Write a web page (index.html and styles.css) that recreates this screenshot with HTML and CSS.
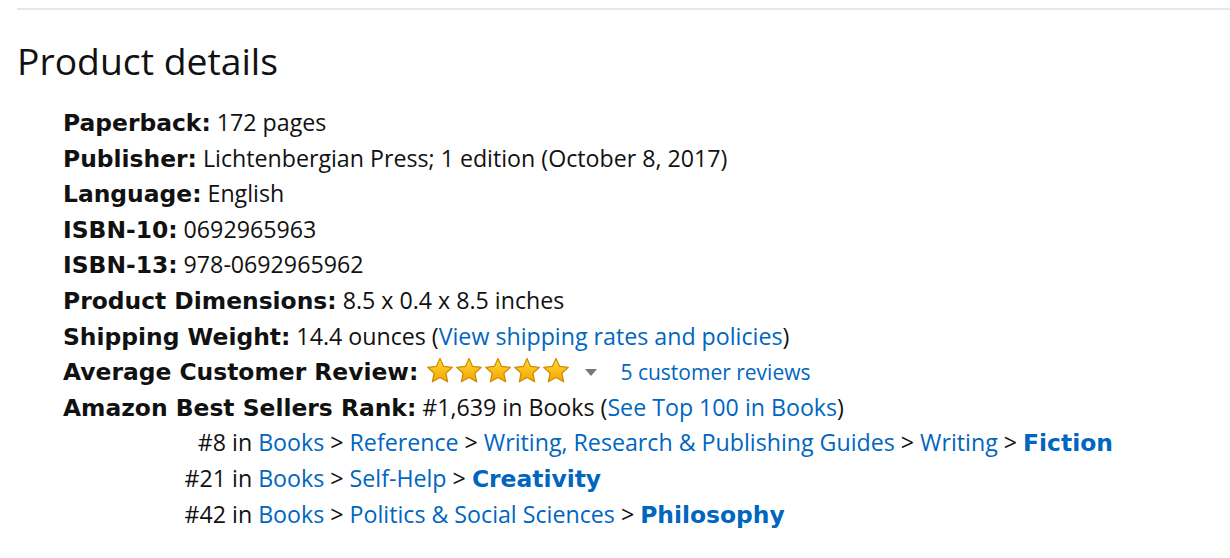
FILE: index.html
```html
<!DOCTYPE html>
<html lang="en">
<head>
    <meta charset="UTF-8">
    <title>Product details</title>
    <link rel="stylesheet" href="styles.css">
</head>
<body>
    <svg class="defs" width="0" height="0">
        <defs>
            <linearGradient id="starFill" x1="0" y1="0" x2="0" y2="1">
                <stop offset="0" stop-color="#ffdc3a"/>
                <stop offset="1" stop-color="#f5a300"/>
            </linearGradient>
        </defs>
    </svg>
    <div class="detail-section">
        <hr class="divider">
        <h2>Product details</h2>
        <ul class="detail-list">
            <li><b>Paperback:</b> 172 pages</li>
            <li><b>Publisher:</b> Lichtenbergian Press; 1 edition (October 8, 2017)</li>
            <li><b>Language:</b> English</li>
            <li><b>ISBN-10:</b> 0692965963</li>
            <li><b>ISBN-13:</b> 978-0692965962</li>
            <li><b>Product Dimensions:</b> 8.5 x 0.4 x 8.5 inches</li>
            <li><b>Shipping Weight:</b> 14.4 ounces (<a href="#">View shipping rates and policies</a>)</li>
            <li class="review-row">
                <b>Average Customer Review:</b>
                <span class="stars">
                    <svg viewBox="0 0 30 28"><path d="M15 1.5l3.9 8.6 9.4 1-7 6.4 2 9.2L15 22 6.7 26.7l2-9.2-7-6.4 9.4-1z"/></svg>
                    <svg viewBox="0 0 30 28"><path d="M15 1.5l3.9 8.6 9.4 1-7 6.4 2 9.2L15 22 6.7 26.7l2-9.2-7-6.4 9.4-1z"/></svg>
                    <svg viewBox="0 0 30 28"><path d="M15 1.5l3.9 8.6 9.4 1-7 6.4 2 9.2L15 22 6.7 26.7l2-9.2-7-6.4 9.4-1z"/></svg>
                    <svg viewBox="0 0 30 28"><path d="M15 1.5l3.9 8.6 9.4 1-7 6.4 2 9.2L15 22 6.7 26.7l2-9.2-7-6.4 9.4-1z"/></svg>
                    <svg viewBox="0 0 30 28"><path d="M15 1.5l3.9 8.6 9.4 1-7 6.4 2 9.2L15 22 6.7 26.7l2-9.2-7-6.4 9.4-1z"/></svg>
                </span>
                <span class="caret"></span>
                <a href="#" class="review-link">5 customer reviews</a>
            </li>
            <li>
                <b>Amazon Best Sellers Rank:</b> #1,639 in Books (<a href="#">See Top 100 in Books</a>)
                <ul class="rank-list">
                    <li><span class="rank">#8</span> in <a href="#">Books</a> &gt; <a href="#">Reference</a> &gt; <a href="#">Writing, Research &amp; Publishing Guides</a> &gt; <a href="#">Writing</a> &gt; <b><a href="#">Fiction</a></b></li>
                    <li><span class="rank">#21</span> in <a href="#">Books</a> &gt; <a href="#">Self-Help</a> &gt; <b><a href="#">Creativity</a></b></li>
                    <li><span class="rank">#42</span> in <a href="#">Books</a> &gt; <a href="#">Politics &amp; Social Sciences</a> &gt; <b><a href="#">Philosophy</a></b></li>
                </ul>
            </li>
        </ul>
    </div>
</body>
</html>
```

FILE: styles.css
```css
body {
    margin: 0;
    background: #fff;
    color: #111;
    font-family: "Open Sans", Arial, sans-serif;
    font-size: 23.2px;
}
.defs {
    position: absolute;
}
.detail-section {
    padding: 8px 0 0 17px;
}
.divider {
    border: 0;
    border-top: 2px solid #e7e7e7;
    margin: 0;
}
h2 {
    font-weight: normal;
    font-size: 37.3px;
    margin: 29px 0 22px 0;
    line-height: 44px;
}
.detail-list {
    list-style: none;
    margin: 0;
    padding: 0 0 0 46px;
}
.detail-list li {
    line-height: 35.6px;
}
.detail-list b {
    font-family: "DejaVu Sans", Verdana, sans-serif;
    font-size: 23.4px;
    font-weight: bold;
    color: #111;
    line-height: 0;
}
a {
    color: #0066c0;
    text-decoration: none;
    line-height: 0;
}
.stars {
    display: inline-flex;
    gap: 1px;
    vertical-align: -3px;
    margin-left: 2px;
}
.stars svg {
    width: 28px;
    height: 26px;
    fill: url(#starFill);
    stroke: #cf8a00;
    stroke-width: 1.3;
    stroke-linejoin: round;
}
.caret {
    display: inline-block;
    width: 0;
    height: 0;
    border-left: 6px solid transparent;
    border-right: 6px solid transparent;
    border-top: 7px solid #777;
    margin: 0 17px 0 9px;
    vertical-align: 4px;
}
.review-link {
    font-size: 21px;
}
.rank-list {
    list-style: none;
    margin: 0;
    padding: 0;
}
.rank {
    display: inline-block;
    width: 163px;
    text-align: right;
}
```
